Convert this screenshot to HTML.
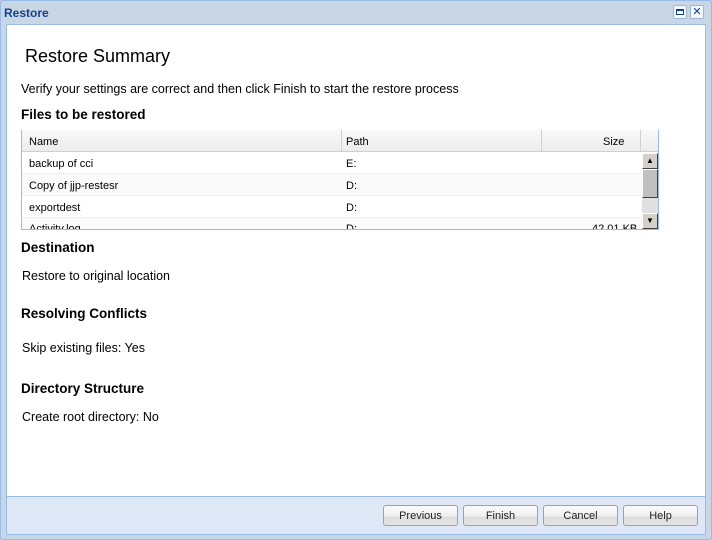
<!DOCTYPE html>
<html><head><style>
*{margin:0;padding:0;box-sizing:border-box}
body{width:712px;height:540px;background:#c9d6e6;font-family:"Liberation Sans",sans-serif;position:relative;overflow:hidden}
.win{position:absolute;left:0;top:0;width:712px;height:540px;border:1px solid #99bbe8;border-radius:3px;background:#c9d6e6}
.title{position:absolute;left:4px;top:6px;font-size:12px;font-weight:bold;color:#15428b}
.tb{position:absolute;top:5px;width:14px;height:14px;border:1px solid #9fb5d1;background:#f4f7fb;border-radius:2px}
.body{position:absolute;left:6px;top:24px;width:700px;height:473px;background:#fff;border:1px solid #99bbe8}
.foot{position:absolute;left:6px;top:497px;width:700px;height:38px;background:#dfe8f6;border:1px solid #99bbe8;border-top:none}
.t{position:absolute;font-size:12.5px;color:#000;white-space:nowrap}
.h{font-weight:bold;font-size:13.5px}
.btn{position:absolute;top:505px;width:75px;height:21px;border:1px solid #a0a0a0;border-radius:3px;background:linear-gradient(#fafafa,#f0f0f0 55%,#dcdcdc 56%,#e4e4e4);font-size:11px;text-align:center;line-height:21px;color:#222}
.grid{position:absolute;left:21px;top:130px;width:638px;height:100px;border:1px solid #99bbe8;border-top:none;overflow:hidden;background:#fff}
.hd{position:absolute;left:0;top:0;width:636px;height:22px;background:linear-gradient(#f9f9f9,#ececec);border-bottom:1px solid #d0d0d0}
.c{position:absolute;font-size:11px;color:#000;white-space:nowrap}
.row{position:absolute;left:0;width:620px;height:22px;border-bottom:1px solid #ededed}
.sep{position:absolute;top:0;width:1px;height:22px;background:#d0d0d0}
</style></head><body>
<div class="win"></div>
<div class="title">Restore</div>
<div class="tb" style="left:673px"><div style="position:absolute;left:2px;top:3px;width:8px;height:6px;border:1px solid #15428b;border-top-width:2px"></div></div>
<div class="tb" style="left:690px;font-size:11px;line-height:12px;text-align:center;color:#15428b">✕</div>
<div class="body"></div>
<div class="foot"></div>
<div class="t" style="left:25px;top:46px;font-size:18px">Restore Summary</div>
<div class="t" style="left:21px;top:82px">Verify your settings are correct and then click Finish to start the restore process</div>
<div class="t h" style="left:21px;top:107px">Files to be restored</div>
<div class="grid">
<div class="hd"></div>
<div class="sep" style="left:319px"></div><div class="sep" style="left:519px"></div><div class="sep" style="left:618px"></div>
<div class="c" style="left:7px;top:6px">Name</div><div class="c" style="left:324px;top:6px">Path</div><div class="c" style="left:581px;top:6px">Size</div>
<div class="row" style="top:22px;background:#fff"></div>
<div class="row" style="top:44px;background:#fafafa"></div>
<div class="row" style="top:66px;background:#fff"></div>
<div class="row" style="top:88px;background:#fafafa"></div>
<div class="c" style="left:7px;top:28px">backup of cci</div><div class="c" style="left:324px;top:28px">E:</div>
<div class="c" style="left:7px;top:50px">Copy of jjp-restesr</div><div class="c" style="left:324px;top:50px">D:</div>
<div class="c" style="left:7px;top:72px">exportdest</div><div class="c" style="left:324px;top:72px">D:</div>
<div class="c" style="left:7px;top:93px">Activity.log</div><div class="c" style="left:324px;top:93px">D:</div><div class="c" style="left:570px;top:93px">42.01 KB</div>
<div style="position:absolute;left:620px;top:23px;width:16px;height:77px;background:#e0e0e0"></div>
<div style="position:absolute;left:620px;top:23px;width:16px;height:16px;background:#d4d0c8;border:1px solid;border-color:#fff #404040 #404040 #fff;font-size:8px;text-align:center;line-height:14px">▲</div>
<div style="position:absolute;left:620px;top:39px;width:16px;height:29px;background:#c0c0c0;border:1px solid;border-color:#fff #404040 #404040 #fff"></div>
<div style="position:absolute;left:620px;top:83px;width:16px;height:16px;background:#d4d0c8;border:1px solid;border-color:#fff #404040 #404040 #fff;font-size:8px;text-align:center;line-height:14px">▼</div>
</div>
<div class="t h" style="left:21px;top:240px">Destination</div>
<div class="t" style="left:22px;top:269px">Restore to original location</div>
<div class="t h" style="left:21px;top:306px">Resolving Conflicts</div>
<div class="t" style="left:22px;top:341px">Skip existing files: Yes</div>
<div class="t h" style="left:21px;top:381px">Directory Structure</div>
<div class="t" style="left:22px;top:410px">Create root directory: No</div>
<div class="btn" style="left:383px">Previous</div>
<div class="btn" style="left:463px">Finish</div>
<div class="btn" style="left:543px">Cancel</div>
<div class="btn" style="left:623px">Help</div>
</body></html>
